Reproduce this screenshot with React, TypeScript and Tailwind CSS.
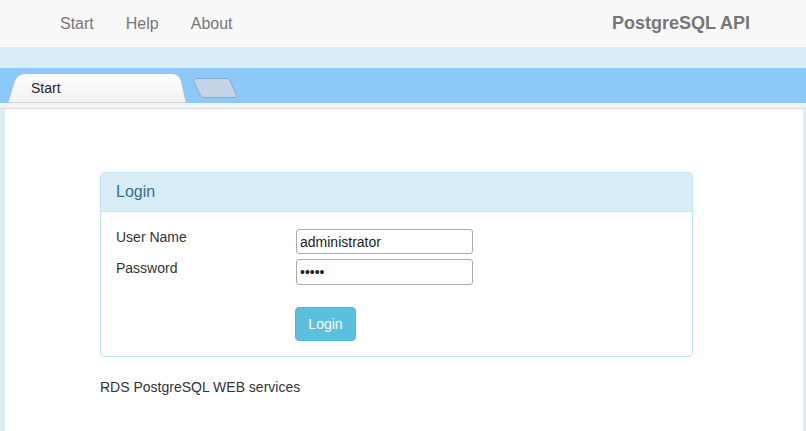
import React from 'react'

function TabShape({ children }: { children: React.ReactNode }) {
  return (
    <div className="relative w-[180px] h-[30px] flex items-center">
      <svg className="absolute inset-0" width="180" height="30" viewBox="0 0 180 30">
        <defs>
          <linearGradient id="tabg" x1="0" y1="0" x2="0" y2="1">
            <stop offset="0" stopColor="#ffffff" />
            <stop offset="1" stopColor="#f1f1f1" />
          </linearGradient>
        </defs>
        <path
          d="M0.5,30 C4,22 6,8 10,4 C12,1.5 15,0.5 20,0.5 L163,0.5 C169,0.5 172,2 174,7 C176,13 177,22 179.5,30 Z"
          fill="url(#tabg)"
          stroke="#a9bfd3"
          strokeWidth="1"
        />
      </svg>
      <span className="relative pl-[24px] pt-[1px] text-[14px] text-[#222]">{children}</span>
    </div>
  )
}

function GhostTab() {
  return (
    <svg width="46" height="22" viewBox="0 0 46 22" className="mb-[4px] ml-[5px]">
      <path
        d="M4,1.5 L34,1.5 C36,1.5 37,2.5 38,4 L44,17 C45,19 44,20.5 42,20.5 L12,20.5 C10,20.5 9,19.5 8,18 L2,5 C1,3 2,1.5 4,1.5 Z"
        fill="#c3d4e6"
        stroke="#8eaacb"
        strokeWidth="1"
      />
    </svg>
  )
}

export default function App() {
  return (
    <div className="w-[806px] h-[431px] flex flex-col bg-[#d9edf7] overflow-hidden font-['Liberation_Sans',Arial,sans-serif] text-[14px] text-[#333]">
      {/* Navbar */}
      <nav className="h-[47px] shrink-0 bg-[#f8f8f8] flex items-center">
        <ul className="flex pl-[44px] text-[16px] text-[#777]">
          <li className="px-[16px]">Start</li>
          <li className="px-[16px]">Help</li>
          <li className="px-[16px]">About</li>
        </ul>
        <div className="ml-auto mr-[56px] text-[18px] font-bold text-[#777]">PostgreSQL API</div>
      </nav>

      <div className="h-[21px] shrink-0" />

      {/* Tab strip */}
      <div className="h-[35px] shrink-0 bg-[#8cc8f8] flex items-end pl-[7px]">
        <TabShape>Start</TabShape>
        <GhostTab />
      </div>
      <div className="h-[6px] shrink-0 bg-[#f3f3f3] border-b border-[#dcdcdc]" />

      {/* Content */}
      <main className="flex-1 ml-[5px] mr-[3px] bg-white pl-[95px] pr-[110px] pt-[63px]">
        <section className="w-[593px] border border-[#bce8f1] rounded-[4px]">
          <header className="h-[39px] bg-[#d9edf7] border-b border-[#bce8f1] rounded-t-[3px] flex items-center px-[15px] text-[16px] text-[#31708f]">
            Login
          </header>
          <div className="px-[15px] pt-[16px] pb-[15px]">
            <div className="grid grid-cols-[180px_1fr] gap-y-[5px]">
              <label className="leading-[20px] -mt-[1px] pb-[4px]">User Name</label>
              <input
                readOnly
                value="administrator"
                className="mt-[1px] w-[177px] h-[25px] border border-[#a9a9a9] rounded-[3px] px-[3px] text-[14px] text-[#222] outline-none"
              />
              <label className="leading-[20px] -mt-[1px]">Password</label>
              <input
                readOnly
                type="password"
                value="admin"
                className="w-[177px] h-[26px] border border-[#a9a9a9] rounded-[3px] px-[3px] text-[14px] text-[#222] outline-none"
              />
              <div />
              <div className="pt-[17px] -ml-[1px]">
                <button className="w-[61px] h-[34px] bg-[#5bc0de] border border-[#46b8da] rounded-[4px] text-white text-[14px]">
                  Login
                </button>
              </div>
            </div>
          </div>
        </section>
        <p className="mt-[20px]">RDS PostgreSQL WEB services</p>
      </main>
    </div>
  )
}
